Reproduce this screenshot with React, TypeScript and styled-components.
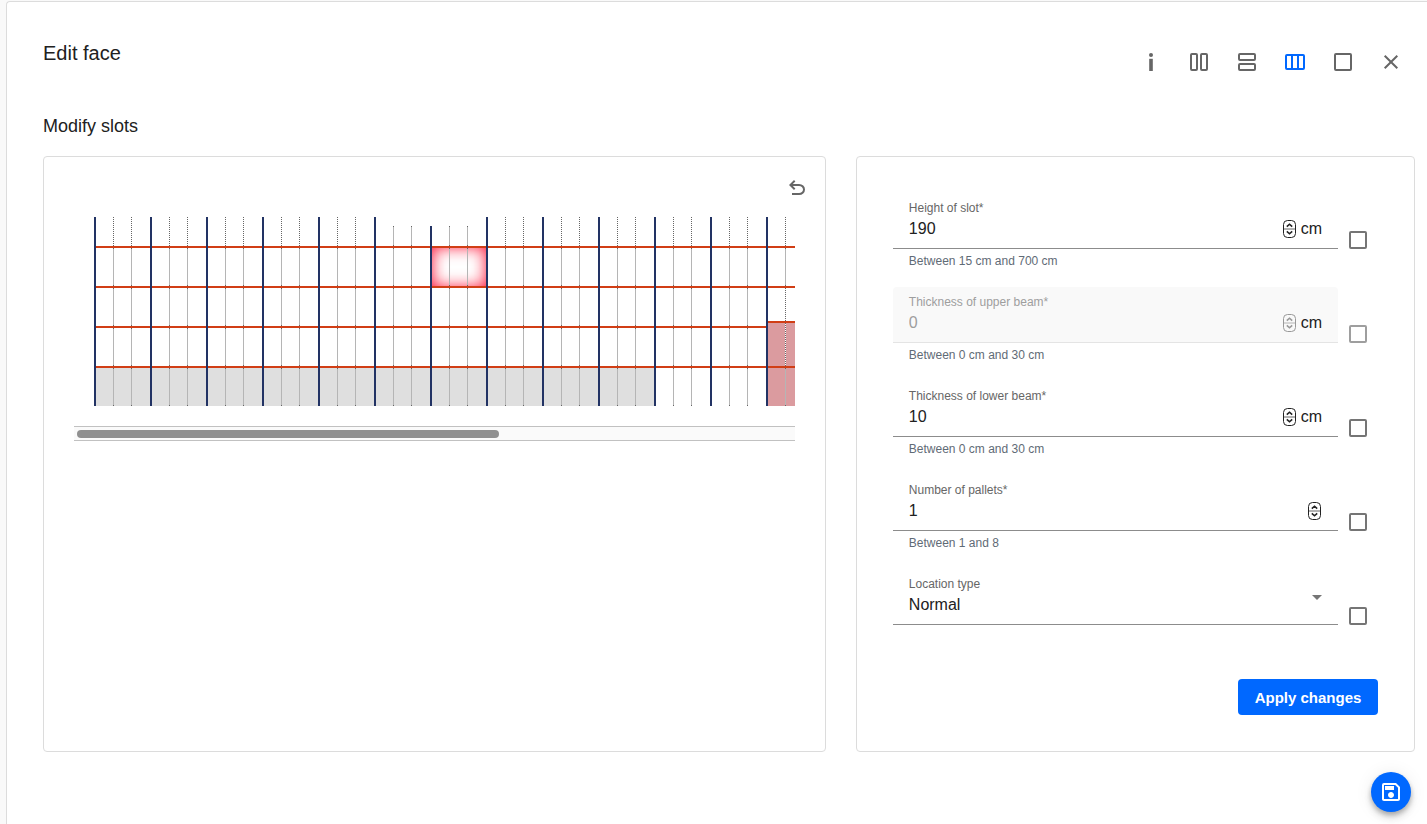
import React from 'react';
import styled, { createGlobalStyle } from 'styled-components';

const GlobalStyle = createGlobalStyle`
  *, *::before, *::after { box-sizing: border-box; }
  body {
    margin: 0;
    background: #f9f9f9;
    color: #212121;
    font-family: "Liberation Sans", Arial, sans-serif;
  }
  button, input, select { font-family: inherit; color: inherit; }
`;

const Page = styled.div`
  display: flex;
  min-height: 100vh;
  padding: 1px 0 0 6px;
`;

const Panel = styled.main`
  flex: 1;
  min-width: 0;
  padding: 36px 12px 36px 36px;
  background: #fff;
  border: solid #dcdcdc;
  border-width: 1px 0 0 1px;
  border-top-left-radius: 4px;
`;

const Header = styled.header`
  display: flex;
  justify-content: space-between;
  align-items: flex-start;
`;

const Title = styled.h1`
  margin: 0;
  font-size: 20px;
  line-height: 30px;
  font-weight: 400;
`;

const Subtitle = styled.h2`
  margin: 28px 0 18px;
  font-size: 18px;
  line-height: 24px;
  font-weight: 400;
`;

const Toolbar = styled.div`
  display: flex;
`;

const IconButton = styled.button<{ $active?: boolean; $size?: number }>`
  display: flex;
  align-items: center;
  justify-content: center;
  width: ${p => p.$size ?? 48}px;
  height: ${p => p.$size ?? 48}px;
  padding: 0;
  border: 0;
  background: none;
  color: ${p => (p.$active ? '#0068ff' : '#666')};
  cursor: pointer;
`;

const Columns = styled.div`
  display: grid;
  grid-template-columns: minmax(0, 7fr) minmax(0, 5fr);
  gap: 30px;
`;

const Card = styled.section`
  border: 1px solid #dcdcdc;
  border-radius: 4px;
`;

const RackCard = styled(Card)`
  padding: 11px 30px;
`;

const RackTools = styled.div`
  display: flex;
  justify-content: flex-end;
  margin-right: -22px;
`;

const RackView = styled.div`
  margin-top: 9px;
  overflow: hidden;

  svg { display: block; }
`;

const ScrollTrack = styled.div`
  margin-top: 20px;
  padding: 3px 3px 2px;
  border: solid #c1c1c1;
  border-width: 1px 0;
  background: #fafafa;
`;

const ScrollThumb = styled.div`
  width: 59%;
  height: 8px;
  border-radius: 4px;
  background: #909090;
`;

const FormCard = styled(Card)`
  padding: 36px;
`;

const Row = styled.div`
  display: flex;
  align-items: center;
  height: 94px;
`;

const FieldBlock = styled.div`
  flex: 1;
  min-width: 0;
  align-self: flex-start;
`;

const Field = styled.div<{ $disabled?: boolean }>`
  height: 56px;
  padding: 7px 16px 0;
  border-bottom: 1px solid ${p => (p.$disabled ? '#e4e4e4' : '#8c8c8c')};
  border-radius: 4px 4px 0 0;
  background: ${p => (p.$disabled ? '#f9f9f9' : 'transparent')};
`;

const Label = styled.label<{ $disabled?: boolean }>`
  display: block;
  font-size: 12px;
  line-height: 16px;
  color: ${p => (p.$disabled ? '#9e9e9e' : '#666')};
`;

const ValueLine = styled.div`
  display: flex;
  align-items: center;
  gap: 4px;
  height: 26px;
  font-size: 16px;
`;

const NumberInput = styled.input`
  flex: 1;
  min-width: 0;
  height: 24px;
  padding: 0;
  border: 0;
  outline: 0;
  background: none;
  font-size: 16px;
  appearance: textfield;

  &::-webkit-inner-spin-button { appearance: none; }
  &:disabled { color: #9e9e9e; }
`;

const Select = styled.select`
  flex: 1;
  min-width: 0;
  height: 24px;
  padding: 0 0 2px;
  border: 0;
  outline: 0;
  background: none;
  font-size: 16px;
  appearance: none;
`;

const SelectArrow = styled.svg`
  align-self: flex-start;
  margin-top: 1px;
`;

const Hint = styled.div`
  padding: 4px 16px 0;
  font-size: 12px;
  line-height: 16px;
  color: #5f6b76;
`;

const Checkbox = styled.input`
  appearance: none;
  flex: none;
  width: 18px;
  height: 18px;
  margin: 0 11px;
  border: 2px solid #757575;
  border-radius: 2px;
  background: #fff;

  &:checked { background: #0068ff; border-color: #0068ff; }
  &:disabled { border-color: #9e9e9e; }
`;

const Actions = styled.div`
  display: flex;
  justify-content: flex-end;
  margin-top: 16px;
`;

const ApplyButton = styled.button`
  width: 140px;
  height: 36px;
  padding: 0;
  border: 0;
  border-radius: 4px;
  background: #0068ff;
  color: #fff;
  font-size: 15px;
  font-weight: 700;
  cursor: pointer;
`;

const SaveButton = styled.button`
  position: fixed;
  right: 16px;
  bottom: 12px;
  display: flex;
  align-items: center;
  justify-content: center;
  width: 40px;
  height: 40px;
  padding: 0;
  border: 0;
  border-radius: 50%;
  background: #0068ff;
  color: #fff;
  box-shadow: 0 3px 5px rgba(0, 0, 0, 0.24), 0 6px 10px rgba(0, 0, 0, 0.12), 0 1px 18px rgba(0, 0, 0, 0.08);
  cursor: pointer;
`;

const Glyph = ({ children }: { children: React.ReactNode }) => (
  <svg width="24" height="24" viewBox="0 0 24 24" fill="none" stroke="currentColor" strokeWidth="2" aria-hidden="true">
    {children}
  </svg>
);

const tools: { name: string; active?: boolean; art: React.ReactNode }[] = [
  {
    name: 'Information',
    art: (
      <g fill="currentColor" stroke="none">
        <circle cx="12" cy="5" r="2" />
        <rect x="10.2" y="8.8" width="3.6" height="12.2" />
      </g>
    ),
  },
  {
    name: 'Edit bays',
    art: (
      <>
        <rect x="4" y="4" width="6" height="16" rx="1" />
        <rect x="14" y="4" width="6" height="16" rx="1" />
      </>
    ),
  },
  {
    name: 'Edit levels',
    art: (
      <>
        <rect x="4" y="4" width="16" height="6" rx="1" />
        <rect x="4" y="14" width="16" height="6" rx="1" />
      </>
    ),
  },
  {
    name: 'Edit slots',
    active: true,
    art: (
      <>
        <rect x="3" y="5" width="18" height="14" rx="1" />
        <path d="M9 5v14M15 5v14" />
      </>
    ),
  },
  { name: 'Edit face', art: <rect x="4" y="4" width="16" height="16" rx="1" /> },
  { name: 'Close', art: <path d="M5.7 5.7 18.3 18.3M18.3 5.7 5.7 18.3" /> },
];

const PITCH = 56;
const BAYS = 21;
const LEVELS = [29, 69, 109, 149];
const BOTTOM = 189;
const range = (n: number) => Array.from({ length: n }, (_, i) => i);

// A pallet divider inside one level, with a darker pixel at each end.
const Divider = ({ x, top, bottom }: { x: number; top: number; bottom: number }) => (
  <>
    <rect x={x} y={top} width="1" height={bottom - top} fill="#b5b5b5" />
    <rect x={x} y={top} width="1" height="1" fill="#666" />
    <rect x={x} y={bottom - 1} width="1" height="1" fill="#666" />
  </>
);

const Dots = ({ x, top, bottom }: { x: number; top: number; bottom: number }) => (
  <>
    <rect x={x} y={top} width="1" height={bottom - top} fill="#fff" />
    <line x1={x + 0.5} x2={x + 0.5} y1={top} y2={bottom} stroke="#666" strokeDasharray="1 1" />
  </>
);

const BayDividers = ({ bay, x }: { bay: number; x: number }) => {
  const short = bay === 5 || bay === 6;
  const blocked = bay >= 12;
  return (
    <>
      {short ? <Divider x={x} top={9} bottom={29} /> : <Dots x={x} top={0} bottom={29} />}
      <Divider x={x} top={31} bottom={69} />
      {blocked ? (
        <>
          <Dots x={x} top={71} bottom={104} />
          <Dots x={x} top={106} bottom={149} />
        </>
      ) : (
        <>
          <Divider x={x} top={71} bottom={109} />
          <Divider x={x} top={111} bottom={149} />
        </>
      )}
      <Divider x={x} top={151} bottom={BOTTOM} />
    </>
  );
};

const Rack = () => {
  const start = 20;
  const end = start + PITCH * BAYS;
  const blockedStart = start + PITCH * 12;
  return (
    <svg width={end + 22} height={BOTTOM} shapeRendering="crispEdges" role="img" aria-label="Rack face with slots">
      <defs>
        <clipPath id="slot"><rect x="358" y="31" width="54" height="38" /></clipPath>
        <filter id="glow" x="-50%" y="-50%" width="200%" height="200%" colorInterpolationFilters="sRGB">
          <feGaussianBlur stdDeviation="8" />
        </filter>
      </defs>
      <rect x={start} y="151" width={PITCH * 10} height="38" fill="#dfdfdf" />
      <rect x={blockedStart} y="106" width={end - blockedStart} height="83" fill="#db9b9f" />
      <g clipPath="url(#slot)">
        <path d="M318-9h134v118H318zM358 30v40h54V30z" fillRule="evenodd" fill="#ff1034" filter="url(#glow)" />
      </g>
      {range(BAYS).map(bay => (
        <g key={bay}>
          <BayDividers bay={bay} x={start + bay * PITCH + 19} />
          <BayDividers bay={bay} x={start + bay * PITCH + 37} />
        </g>
      ))}
      {LEVELS.map(y => (
        <rect key={y} x={start} y={y} width={(y === 109 ? blockedStart : end) - start} height="2" fill="#d13e15" />
      ))}
      <rect x={blockedStart} y="104" width={end - blockedStart} height="2" fill="#d13e15" />
      {range(BAYS + 1).map(post => {
        const top = post === 6 ? 9 : 0;
        return <rect key={post} x={start + post * PITCH} y={top} width="2" height={BOTTOM - top} fill="#223364" />;
      })}
    </svg>
  );
};

const Stepper = ({ faded }: { faded?: boolean }) => (
  <svg width="14" height="20" viewBox="0 0 14 20" fill="none" stroke={faded ? '#999' : '#222'} aria-hidden="true">
    <rect x="0.5" y="1.5" width="12" height="17" rx="4" />
    <path d="M0.5 10h12" strokeOpacity="0.7" />
    <path d="M3.8 7.6 6.5 5.2 9.2 7.6M3.8 12.4 6.5 14.8l2.7-2.4" strokeWidth="1.6" />
  </svg>
);

const fields = [
  { id: 'height', label: 'Height of slot*', value: 190, min: 15, max: 700, unit: 'cm', hint: 'Between 15 cm and 700 cm' },
  { id: 'upper', label: 'Thickness of upper beam*', value: 0, min: 0, max: 30, unit: 'cm', hint: 'Between 0 cm and 30 cm', disabled: true },
  { id: 'lower', label: 'Thickness of lower beam*', value: 10, min: 0, max: 30, unit: 'cm', hint: 'Between 0 cm and 30 cm' },
  { id: 'pallets', label: 'Number of pallets*', value: 1, min: 1, max: 8, hint: 'Between 1 and 8' },
];

export default function App() {
  return (
    <>
      <GlobalStyle />
      <Page>
        <Panel>
          <Header>
            <Title>Edit face</Title>
            <Toolbar>
              {tools.map(tool => (
                <IconButton key={tool.name} type="button" aria-label={tool.name} $active={tool.active}>
                  <Glyph>{tool.art}</Glyph>
                </IconButton>
              ))}
            </Toolbar>
          </Header>
          <Subtitle>Modify slots</Subtitle>
          <Columns>
            <RackCard>
              <RackTools>
                <IconButton type="button" aria-label="Undo" $size={40}>
                  <svg width="24" height="24" viewBox="0 -960 960 960" fill="currentColor" aria-hidden="true">
                    <path d="M280-200v-80h284q63 0 109.5-40T720-420q0-60-46.5-100T564-560H312l104 104-56 56-200-200 200-200 56 56-104 104h252q97 0 166.5 63T800-420q0 94-69.5 157T564-200H280Z" />
                  </svg>
                </IconButton>
              </RackTools>
              <RackView><Rack /></RackView>
              <ScrollTrack><ScrollThumb /></ScrollTrack>
            </RackCard>
            <FormCard as="form" onSubmit={(e: React.FormEvent) => e.preventDefault()}>
              {fields.map(f => (
                <Row key={f.id}>
                  <FieldBlock>
                    <Field $disabled={f.disabled}>
                      <Label htmlFor={f.id} $disabled={f.disabled}>{f.label}</Label>
                      <ValueLine>
                        <NumberInput id={f.id} type="number" min={f.min} max={f.max} defaultValue={f.value} disabled={f.disabled} aria-describedby={`${f.id}-hint`} />
                        <Stepper faded={f.disabled} />
                        {f.unit && <span>{f.unit}</span>}
                      </ValueLine>
                    </Field>
                    <Hint id={`${f.id}-hint`}>{f.hint}</Hint>
                  </FieldBlock>
                  <Checkbox type="checkbox" aria-label={`Apply ${f.label}`} disabled={f.disabled} />
                </Row>
              ))}
              <Row>
                <FieldBlock>
                  <Field>
                    <Label htmlFor="type">Location type</Label>
                    <ValueLine>
                      <Select id="type" defaultValue="Normal">
                        <option>Normal</option>
                      </Select>
                      <SelectArrow width="10" height="10" viewBox="0 0 10 10" fill="#757575" aria-hidden="true">
                        <path d="M0 2h10L5 7z" />
                      </SelectArrow>
                    </ValueLine>
                  </Field>
                </FieldBlock>
                <Checkbox type="checkbox" aria-label="Apply Location type" />
              </Row>
              <Actions>
                <ApplyButton type="submit">Apply changes</ApplyButton>
              </Actions>
            </FormCard>
          </Columns>
        </Panel>
      </Page>
      <SaveButton type="button" aria-label="Save">
        <svg width="24" height="24" viewBox="0 0 24 24" fill="currentColor" aria-hidden="true">
          <path d="M17 3H5a2 2 0 0 0-2 2v14c0 1.1.89 2 2 2h14c1.1 0 2-.9 2-2V7l-4-4zm2 16H5V5h11.17L19 7.83V19zm-7-7c-1.66 0-3 1.34-3 3s1.34 3 3 3 3-1.34 3-3-1.34-3-3-3zM6 6h9v4H6V6z" />
        </svg>
      </SaveButton>
    </>
  );
}
